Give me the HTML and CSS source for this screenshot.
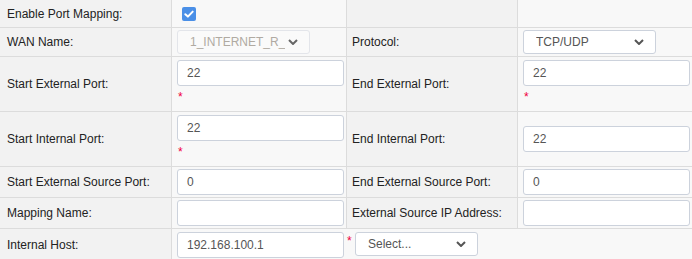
FILE: index.html
```html
<!DOCTYPE html>
<html>
<head>
<meta charset="utf-8">
<link rel="stylesheet" href="styles.css">
</head>
<body>
<div class="form">
  <div class="lbl h27">Enable Port Mapping:</div>
  <div class="val"><span class="check"><svg width="14" height="14" viewBox="0 0 14 14"><path d="M3.3 7.2 L5.9 9.6 L10.7 4.6" fill="none" stroke="#fff" stroke-width="2" stroke-linecap="round" stroke-linejoin="round"/></svg></span></div>
  <div class="lbl"></div>
  <div class="val"></div>

  <div class="lbl">WAN Name:</div>
  <div class="val"><div class="select disabled"><span class="sel-text">1_INTERNET_R_</span><svg class="chev" width="10" height="6" viewBox="0 0 10 6"><path d="M1 1 L5 5 L9 1" fill="none" stroke="#666" stroke-width="2"/></svg></div></div>
  <div class="lbl">Protocol:</div>
  <div class="val"><div class="select proto"><span class="sel-text">TCP/UDP</span><svg class="chev" width="10" height="6" viewBox="0 0 10 6"><path d="M1 1 L5 5 L9 1" fill="none" stroke="#555" stroke-width="2"/></svg></div></div>

  <div class="lbl tall">Start External Port:</div>
  <div class="val"><div class="stack"><input class="inp" value="22"><span class="req">*</span></div></div>
  <div class="lbl tall">End External Port:</div>
  <div class="val"><div class="stack"><input class="inp" value="22"><span class="req">*</span></div></div>

  <div class="lbl tall">Start Internal Port:</div>
  <div class="val"><div class="stack"><input class="inp" value="22"><span class="req">*</span></div></div>
  <div class="lbl tall">End Internal Port:</div>
  <div class="val"><input class="inp" value="22"></div>

  <div class="lbl short">Start External Source Port:</div>
  <div class="val"><input class="inp" value="0"></div>
  <div class="lbl short">End External Source Port:</div>
  <div class="val"><input class="inp" value="0"></div>

  <div class="lbl short">Mapping Name:</div>
  <div class="val"><input class="inp" value=""></div>
  <div class="lbl short">External Source IP Address:</div>
  <div class="val"><input class="inp" value=""></div>

  <div class="lbl last">Internal Host:</div>
  <div class="val wide"><input class="inp" value="192.168.100.1"><span class="req inline">*</span><div class="select host"><span class="sel-text">Select...</span><svg class="chev" width="10" height="6" viewBox="0 0 10 6"><path d="M1 1 L5 5 L9 1" fill="none" stroke="#555" stroke-width="2"/></svg></div></div>
</div>
</body>
</html>
```

FILE: styles.css
```css
html, body {
  margin: 0;
  padding: 0;
  background: #f8f8f8;
}
body {
  font-family: "Liberation Sans", Arial, sans-serif;
  font-size: 12px;
  color: #333;
  overflow: hidden;
}
.form {
  display: grid;
  grid-template-columns: 171px 174px 170px 174px;
  grid-template-rows: 27px 28px 54px 54px 30px 30px 31px;
  gap: 1px;
  background: #dcdcdc;
  width: 692px;
}
.lbl {
  background: #f2f2f2;
  display: flex;
  align-items: center;
  padding-left: 7px;
  color: #222;
}
.form > .lbl:nth-child(4n+3) {
  padding-left: 5px;
}
.val {
  background: #f8f8f8;
  display: flex;
  align-items: center;
  padding-left: 5px;
}
.val.wide {
  grid-column: span 3;
  align-items: flex-start;
  padding-top: 3px;
}
.check {
  display: block;
  width: 14px;
  height: 14px;
  border-radius: 2px;
  background: #4a8fe7;
  margin-left: 5px;
}
.check svg { display: block; }
.stack {
  display: flex;
  flex-direction: column;
  padding-top: 2px;
}
.inp {
  box-sizing: border-box;
  width: 167px;
  height: 26px;
  margin: 0;
  border: 1px solid #ccd2dc;
  border-radius: 3px;
  background: #fff;
  padding: 0 9px;
  font-family: "Liberation Sans", Arial, sans-serif;
  font-size: 12px;
  color: #555;
  outline: none;
}
.req {
  color: #f0003c;
  font-size: 12px;
  height: 24px;
  line-height: 22px;
  padding-left: 1px;
}
.req.inline {
  height: auto;
  line-height: 14px;
  padding: 2px 0 0 3px;
  width: 8px;
}
.select {
  box-sizing: border-box;
  height: 24px;
  border: 1px solid #ccd2dc;
  border-radius: 3px;
  background: #fff;
  display: flex;
  align-items: center;
  justify-content: space-between;
  padding: 0 11px 0 12px;
  color: #555;
}
.select.disabled {
  width: 133px;
  border-color: #e3e5ea;
  background: #fafafa;
  color: #b0aaa2;
}
.select.proto { width: 133px; }
.select.host { width: 123px; margin-left: 0; margin-top: 0; }
.sel-text { white-space: nowrap; overflow: hidden; }
.chev { display: block; flex: none; }
```
